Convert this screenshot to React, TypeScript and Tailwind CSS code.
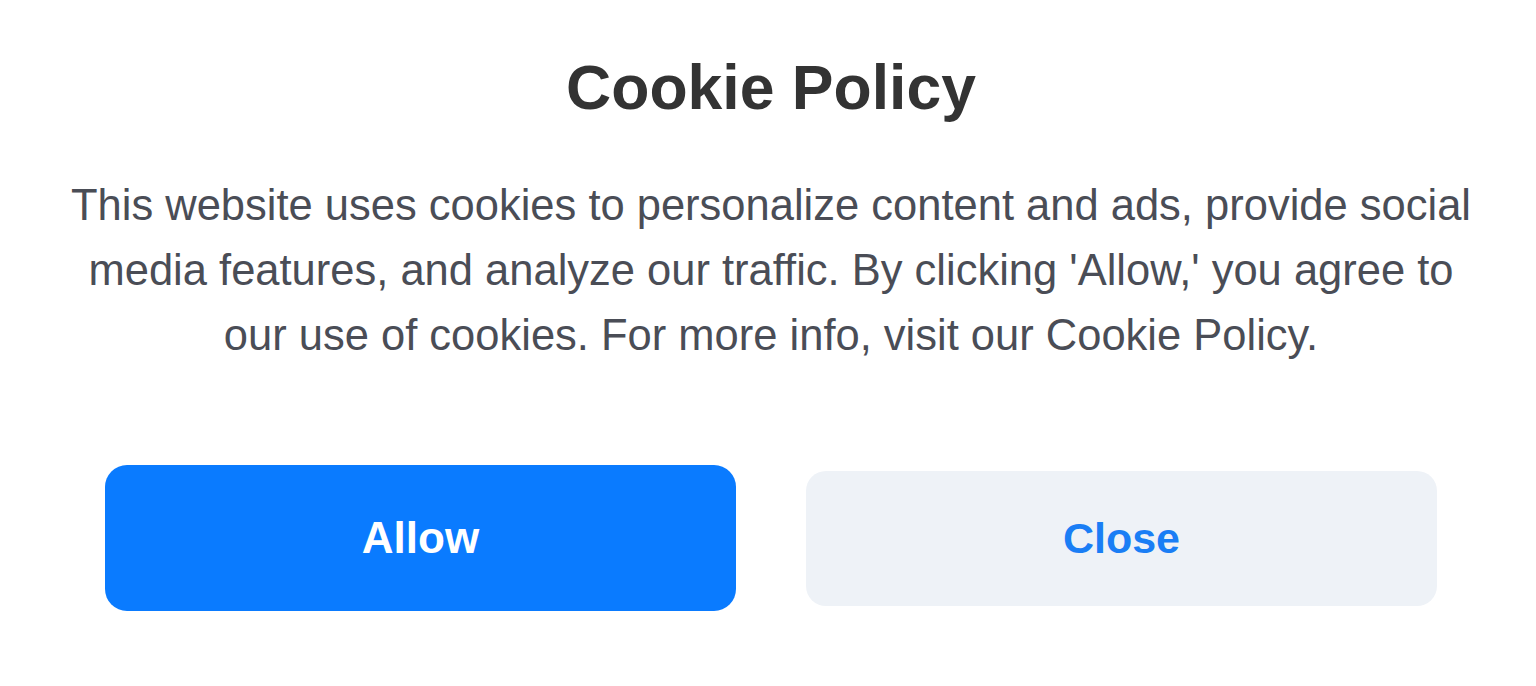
export default function App() {
    return (
        <div
            className="min-h-screen bg-white flex flex-col items-center"
            style={{ fontFamily: '"Liberation Sans", Arial, sans-serif' }}>
            {/* heading */}
            <h1 className="mt-[50px] text-[62.5px] leading-[74px] font-bold text-[#333333] pl-[6px]">
                Cookie Policy
            </h1>

            {/* body copy, broken where the design breaks it */}
            <p className="mt-[49px] pl-[6px] whitespace-nowrap text-center text-[43.5px] leading-[65px] text-[#4a4d56]">
                This website uses cookies to personalize content and ads, provide social
                <br />
                media features, and analyze our traffic. By clicking 'Allow,' you agree to
                <br />
                our use of cookies. For more info, visit our Cookie Policy.
            </p>

            {/* actions */}
            <div className="mt-[97px] w-full pl-[105px] pr-[99px] flex items-center gap-[70px]">
                <button className="flex-1 h-[146px] rounded-[22px] bg-[#0a7bff] text-white text-[44px] font-bold">
                    Allow
                </button>
                <button className="flex-1 h-[135px] rounded-[20px] bg-[#eef2f7] text-[#1a7ef5] text-[43px] font-bold">
                    Close
                </button>
            </div>
        </div>
    );
}
